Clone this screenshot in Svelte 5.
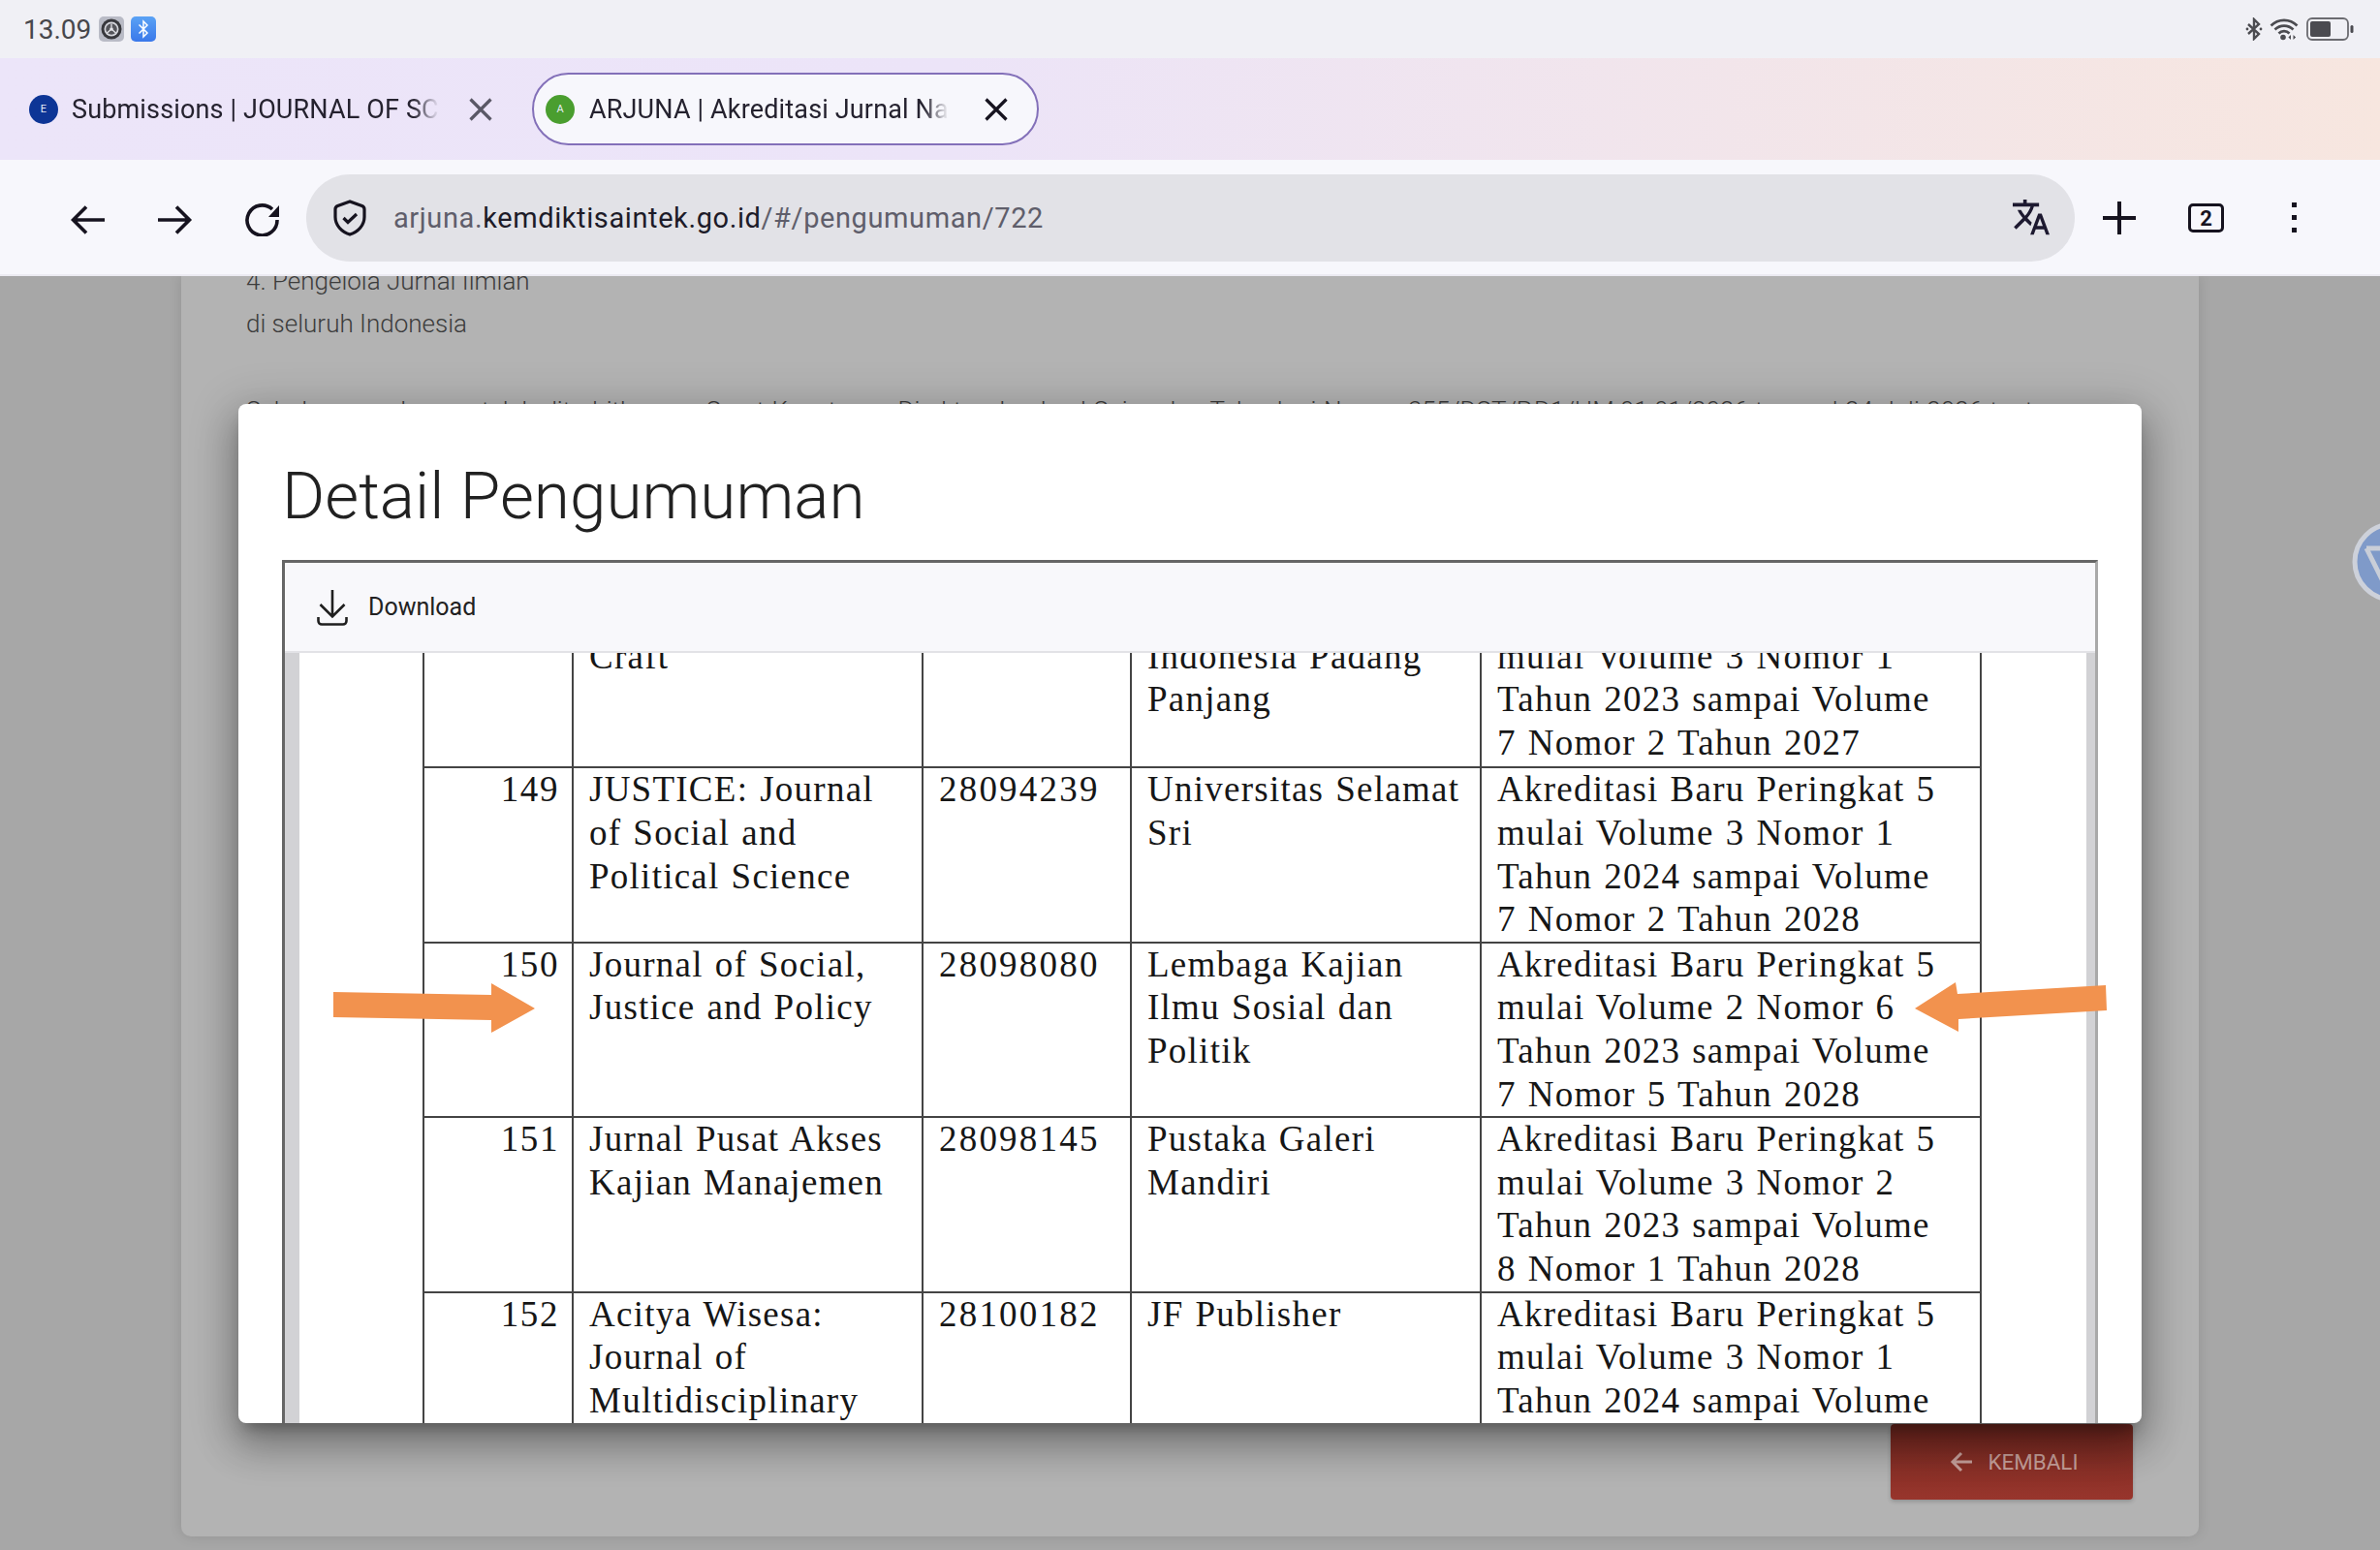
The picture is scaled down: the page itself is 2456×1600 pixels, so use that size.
<script lang="ts">
  const rows = [
    { no: "", title: "\nCraft", issn: "", pub: "\nIndonesia Padang\nPanjang", note: "\nmulai Volume 3 Nomor 1\nTahun 2023 sampai Volume\n7 Nomor 2 Tahun 2027" },
    { no: "149", title: "JUSTICE: Journal\nof Social and\nPolitical Science", issn: "28094239", pub: "Universitas Selamat\nSri", note: "Akreditasi Baru Peringkat 5\nmulai Volume 3 Nomor 1\nTahun 2024 sampai Volume\n7 Nomor 2 Tahun 2028" },
    { no: "150", title: "Journal of Social,\nJustice and Policy", issn: "28098080", pub: "Lembaga Kajian\nIlmu Sosial dan\nPolitik", note: "Akreditasi Baru Peringkat 5\nmulai Volume 2 Nomor 6\nTahun 2023 sampai Volume\n7 Nomor 5 Tahun 2028" },
    { no: "151", title: "Jurnal Pusat Akses\nKajian Manajemen", issn: "28098145", pub: "Pustaka Galeri\nMandiri", note: "Akreditasi Baru Peringkat 5\nmulai Volume 3 Nomor 2\nTahun 2023 sampai Volume\n8 Nomor 1 Tahun 2028" },
    { no: "152", title: "Acitya Wisesa:\nJournal of\nMultidisciplinary", issn: "28100182", pub: "JF Publisher", note: "Akreditasi Baru Peringkat 5\nmulai Volume 3 Nomor 1\nTahun 2024 sampai Volume" },
  ];
</script>

<div class="screen">
  <div class="status-bar">
    <span class="clock">13.09</span>
    <svg class="status-app" viewBox="0 0 26 26">
      <rect width="26" height="26" rx="5" fill="#b9bbc6" />
      <circle cx="13" cy="13" r="10.500" fill="#38383d" />
      <circle cx="13" cy="13" r="7.500" fill="#d5d6dc" />
      <circle cx="13" cy="13" r="5.800" fill="#55555b" />
      <path d="M13 7.500v4M13 13l-4.500 4M13 13l4.500 4" stroke="#e3e3e8" stroke-width="1.300" fill="none" />
      <circle cx="13" cy="13" r="1.800" fill="#e3e3e8" />
    </svg>
    <svg class="status-app" viewBox="0 0 26 26">
      <defs>
        <linearGradient id="btblue" x1="0" y1="0" x2="0" y2="1">
          <stop offset="0" stop-color="#5aa2f5" />
          <stop offset="1" stop-color="#3a78ea" />
        </linearGradient>
      </defs>
      <rect width="26" height="26" rx="5" fill="url(#btblue)" />
      <path d="M8.500 8.500 17 17l-4 4V5l4 4-8.500 8.500" fill="none" stroke="#fff" stroke-width="1.500" />
    </svg>
    <span class="spacer"></span>
    <svg class="status-icon bt" viewBox="0 0 18 24">
      <path d="M3 7l11 10-5 5V2l5 5L3 17" fill="none" stroke="#4b4b50" stroke-width="2.400" />
      <circle cx="2" cy="12" r="1.400" fill="#4b4b50" />
      <circle cx="16" cy="12" r="1.400" fill="#4b4b50" />
    </svg>
    <svg class="status-icon wifi" viewBox="0 0 30 24">
      <path d="M1.500 8.500a19 19 0 0 1 27 0M5.500 12.500a13.500 13.500 0 0 1 19 0M9.500 16.500a7.500 7.500 0 0 1 11 0" fill="none" stroke="#4b4b50" stroke-width="2.600" />
      <circle cx="14" cy="20.500" r="2.800" fill="#4b4b50" />
      <path d="M22 18v5l-2.600-2.500zM24.500 18v5l2.600-2.500z" fill="#4b4b50" />
    </svg>
    <svg class="status-icon battery" viewBox="0 0 50 24">
      <rect x="1" y="1" width="42" height="22" rx="5" fill="none" stroke="#6b6b70" stroke-width="1.800" />
      <rect x="4" y="4" width="21" height="16" rx="2" fill="#4b4b50" />
      <rect x="45.500" y="8" width="3" height="8" rx="1.500" fill="#4b4b50" />
    </svg>
  </div>

  <div class="tab-bar">
    <div class="tab">
      <span class="favicon blue">E</span>
      <span class="tab-title">Submissions | JOURNAL OF SC</span>
      <svg class="tab-close muted" viewBox="0 0 24 24"><path d="M1.500 1.500l21 21M22.500 1.500l-21 21" /></svg>
    </div>
    <div class="tab active">
      <span class="favicon green">A</span>
      <span class="tab-title">ARJUNA | Akreditasi Jurnal Na</span>
      <svg class="tab-close" viewBox="0 0 24 24"><path d="M1.500 1.500l21 21M22.500 1.500l-21 21" /></svg>
    </div>
  </div>

  <div class="toolbar">
    <svg class="nav-icon" viewBox="0 0 36 30"><path d="M35 15H3M16 1.500 2.500 15 16 28.500" /></svg>
    <svg class="nav-icon" viewBox="0 0 36 30"><path d="M0 15h32M19 1.500 32.500 15 19 28.500" /></svg>
    <svg class="nav-icon reload" viewBox="0 0 36 36"><path d="M28 8A15.500 15.500 0 1 0 33 19" /><path class="solid" d="M35 4v12H24z" /></svg>
    <div class="address">
      <svg class="shield" viewBox="0 0 36 38">
        <path d="M18 2 5.500 6.500Q3 7.500 3 10v8c0 8.500 6.500 15.500 15 18 8.500-2.500 15-9.500 15-18v-8q0-2.500-2.500-3.500z" />
        <path d="M11.500 19 16 23.500 25 15" />
      </svg>
      <span class="url"><span class="url-dim">arjuna.</span>kemdiktisaintek.go.id<span class="url-dim">/#/pengumuman/722</span></span>
      <span class="spacer"></span>
      <svg class="translate" viewBox="2 2 21 21"><path d="M12.870 15.070l-2.540-2.510.03-.03c1.740-1.940 2.980-4.170 3.710-6.530H17V4h-7V2H8v2H1v1.990h11.170C11.500 7.920 10.400 9.750 9 11.300 8.090 10.290 7.340 9.190 6.750 8H4.750c.73 1.630 1.730 3.170 2.980 4.560l-5.090 5.020L4 19l5-5 3.110 3.110.76-2.040zM18.500 10h-2L12 22h2l1.120-3h4.750L21 22h2l-4.500-12zm-2.620 7l1.620-4.330L19.120 17h-3.240z" /></svg>
    </div>
    <svg class="plus" viewBox="0 0 34 34"><path d="M17 0v34M0 17h34" /></svg>
    <span class="tab-count">2</span>
    <span class="menu-dots"><i></i><i></i><i></i></span>
  </div>

  <div class="page">
    <div class="card">
      <p class="bg-line clipped">4. Pengelola Jurnal Ilmiah</p>
      <p class="bg-line">di seluruh Indonesia</p>
      <p class="bg-line para">Sehubungan dengan telah diterbitkannya Surat Keputusan Direktur Jenderal Sains dan Teknologi Nomor 355/DST/P.D1/HM.01.01/2026 tanggal 24 Juli 2026 tent</p>
      <button class="back-btn">
        <svg viewBox="0 0 24 24"><path d="M23 12H3M12 3l-9 9 9 9" /></svg>
        KEMBALI
      </button>
    </div>

    <svg class="float-widget" viewBox="0 0 30 84">
      <circle cx="43" cy="42" r="39" fill="#7f9ac9" stroke="#cdd1da" stroke-width="5" />
      <path d="M16 28h20M16 28l18 36" fill="none" stroke="#c9ced8" stroke-width="5" />
    </svg>

    <div class="modal">
      <h2>Detail Pengumuman</h2>
      <div class="viewer">
        <div class="viewer-bar">
          <svg viewBox="0 0 32 38"><path d="M16 1v27M3.500 16 16 28.500 28.500 16M1.500 29v4a3.500 3.500 0 0 0 3.500 3.500h22a3.500 3.500 0 0 0 3.500-3.500v-4" /></svg>
          <span>Download</span>
        </div>
        <div class="viewer-doc">
          <table>
            <colgroup>
              <col class="c-no" /><col class="c-title" /><col class="c-issn" /><col class="c-pub" /><col class="c-note" />
            </colgroup>
            <tbody>
              {#each rows as row}
                <tr>
                  <td class="num">{row.no}</td>
                  <td>{row.title}</td>
                  <td class="num-left">{row.issn}</td>
                  <td>{row.pub}</td>
                  <td>{row.note}</td>
                </tr>
              {/each}
            </tbody>
          </table>
        </div>
      </div>
      <svg class="arrows" viewBox="0 0 1964 1052">
        <polygon points="98,607 261,610 261,598 306,624 261,649 261,636 98,633" />
        <polygon points="1730,624 1772,597 1774,609 1927,600 1928,626 1775,635 1775,648" />
      </svg>
    </div>
  </div>
</div>

<style>
  :global(body) {
    margin: 0;
    background: #a7a7a7;
    font-family: Roboto, "Liberation Sans", sans-serif;
  }

  .screen {
    width: 2456px;
    height: 1600px;
    display: flex;
    flex-direction: column;
    overflow: hidden;
  }

  .spacer {
    flex: 1;
  }

  .status-bar {
    height: 60px;
    flex: none;
    display: flex;
    align-items: center;
    padding: 0 26px 0 24px;
    background: #f0f0f5;
  }

  .clock {
    font-size: 28px;
    color: #47474c;
    margin-right: 8px;
  }

  .status-app {
    width: 26px;
    height: 26px;
    margin-right: 7px;
  }

  .status-icon.bt {
    width: 18px;
    height: 24px;
    margin-right: 7px;
  }

  .status-icon.wifi {
    width: 30px;
    height: 24px;
    margin-right: 8px;
  }

  .status-icon.battery {
    width: 50px;
    height: 24px;
  }

  .tab-bar {
    height: 105px;
    flex: none;
    display: flex;
    align-items: center;
    padding: 0 0 0 11px;
    gap: 15px;
    background: linear-gradient(90deg, #ece5f9 0%, #ece4f8 40%, #f7e6df 100%);
  }

  .tab {
    width: 523px;
    height: 75px;
    box-sizing: border-box;
    display: flex;
    align-items: center;
    padding: 0 24px 0 17px;
    border: 2px solid transparent;
    border-radius: 38px;
    color: #25222f;
    font-size: 27px;
    letter-spacing: 0.15px;
  }

  .tab.active {
    background: #f7f7fc;
    border-color: #8370b9;
    padding: 0 30px 0 12px;
  }

  .tab.active .favicon {
    margin-right: 15px;
  }

  .favicon {
    width: 30px;
    height: 30px;
    flex: none;
    border-radius: 50%;
    display: flex;
    align-items: center;
    justify-content: center;
    color: #e7ecf6;
    font-size: 11px;
    letter-spacing: 0;
    margin-right: 14px;
  }

  .favicon.blue {
    background: #0d3596;
  }

  .favicon.green {
    background: #4a9e2f;
  }

  .tab-title {
    flex: none;
    white-space: nowrap;
    mask-image: linear-gradient(90deg, #000 93%, transparent 100%);
  }

  .tab-close {
    width: 24px;
    height: 24px;
    flex: none;
    margin-left: auto;
    fill: none;
    stroke: #16131f;
    stroke-width: 3.200px;
  }

  .tab-close.muted {
    stroke: #5a5866;
  }

  .toolbar {
    height: 120px;
    flex: none;
    box-sizing: border-box;
    display: flex;
    align-items: flex-start;
    padding: 15px 0 0 73px;
    background: #f7f7fc;
    border-bottom: 2px solid #ecebf2;
  }

  .nav-icon {
    width: 36px;
    height: 30px;
    margin: 32px 54px 0 0;
    fill: none;
    stroke: #16131f;
    stroke-width: 3.600px;
  }

  .nav-icon.reload {
    height: 36px;
    margin: 28px 27px 0 0;
  }

  .nav-icon .solid {
    fill: #16131f;
    stroke: none;
  }

  .address {
    width: 1825px;
    height: 90px;
    flex: none;
    box-sizing: border-box;
    display: flex;
    align-items: center;
    padding: 0 26px 0 27px;
    border-radius: 45px;
    background: #e2e2e7;
  }

  .shield {
    width: 36px;
    height: 38px;
    margin-right: 27px;
    fill: none;
    stroke: #16131f;
    stroke-width: 3.200px;
  }

  .url {
    font-size: 29px;
    letter-spacing: 0.6px;
    color: #1d1b28;
  }

  .url-dim {
    color: #5f5e6b;
  }

  .translate {
    width: 38px;
    height: 38px;
    fill: #1d1930;
  }

  .plus {
    width: 34px;
    height: 34px;
    margin: 28px 0 0 29px;
    fill: none;
    stroke: #16131f;
    stroke-width: 4px;
  }

  .tab-count {
    width: 37px;
    height: 30px;
    box-sizing: border-box;
    margin: 30px 0 0 54px;
    border: 3px solid #16131f;
    border-radius: 5px;
    display: flex;
    align-items: center;
    justify-content: center;
    font-size: 22px;
    font-weight: 700;
    color: #16131f;
  }

  .menu-dots {
    display: flex;
    flex-direction: column;
    gap: 8px;
    margin: 29px 0 0 70px;
  }

  .menu-dots i {
    width: 5px;
    height: 5px;
    background: #16131f;
  }

  .page {
    flex: 1;
    position: relative;
    overflow: hidden;
    padding-left: 187px;
  }

  .card {
    width: 2082px;
    height: 1301px;
    box-sizing: border-box;
    display: flex;
    flex-direction: column;
    padding: 0 68px 38px 67px;
    background: #b3b3b3;
    border-radius: 0 0 10px 10px;
    box-shadow: 0 0 14px rgba(0, 0, 0, 0.12);
  }

  .bg-line {
    margin: 0;
    height: 44px;
    line-height: 44px;
    font-size: 26px;
    font-weight: 300;
    color: #3c3c3c;
    white-space: nowrap;
  }

  .bg-line.clipped {
    margin-top: -17px;
  }

  .bg-line.para {
    margin-top: 46px;
    word-spacing: 1.2px;
  }

  .back-btn {
    width: 250px;
    height: 78px;
    margin-top: auto;
    align-self: flex-end;
    display: flex;
    align-items: center;
    justify-content: center;
    gap: 15px;
    padding: 0 0 0 5px;
    border: none;
    border-radius: 4px;
    background: linear-gradient(180deg, #762921, #98352c);
    color: #c7a19c;
    font-family: Roboto, sans-serif;
    font-size: 22.400px;
    box-shadow: 0 2px 4px rgba(0, 0, 0, 0.2);
  }

  .back-btn svg {
    width: 24px;
    height: 24px;
    fill: none;
    stroke: #c7a19c;
    stroke-width: 3px;
  }

  .float-widget {
    position: absolute;
    right: 0;
    top: 253px;
    width: 30px;
    height: 84px;
  }

  .modal {
    position: absolute;
    left: 246px;
    top: 132px;
    width: 1964px;
    height: 1052px;
    box-sizing: border-box;
    display: flex;
    flex-direction: column;
    padding: 0 45px;
    background: #fff;
    border-radius: 8px;
    box-shadow: 0 11px 15px -7px rgba(0, 0, 0, 0.3), 0 24px 38px 3px rgba(0, 0, 0, 0.22), 0 9px 46px 8px rgba(0, 0, 0, 0.18);
  }

  h2 {
    margin: 55px 0 26px;
    height: 80px;
    line-height: 80px;
    font-size: 67.500px;
    font-weight: 300;
    color: #212121;
  }

  .viewer {
    flex: 1;
    min-height: 0;
    display: flex;
    flex-direction: column;
    width: 1874px;
    box-sizing: border-box;
    border-top: 3px solid #666;
    border-left: 3px solid #666;
    border-right: 3px solid #a9a9a9;
  }

  .viewer-bar {
    height: 93px;
    flex: none;
    box-sizing: border-box;
    display: flex;
    align-items: center;
    gap: 21px;
    padding-left: 33px;
    background: #f8f8fb;
    border-bottom: 2px solid #e2e2e6;
    font-size: 25px;
    color: #222;
  }

  .viewer-bar svg {
    width: 32px;
    height: 38px;
    fill: none;
    stroke: #1f1f1f;
    stroke-width: 2.600px;
  }

  .viewer-doc {
    flex: 1;
    min-height: 0;
    overflow: hidden;
    background: #fff;
    border-left: 15px solid #d2d2d5;
    border-right: 9px solid #d2d2d5;
  }

  table {
    table-layout: fixed;
    width: 1607px;
    margin: -65px 0 0 127px;
    border-collapse: collapse;
    font-family: "Liberation Serif", serif;
    font-size: 37px;
    line-height: 44.600px;
    letter-spacing: 1.25px;
    word-spacing: 1.5px;
    color: #161616;
  }

  .c-no { width: 154px; }
  .c-title { width: 361px; }
  .c-issn { width: 215px; }
  .c-pub { width: 361px; }
  .c-note { width: 516px; }

  tr {
    height: 180.400px;
  }

  tr:first-child {
    height: 182.400px;
  }

  td {
    padding: 0 16px;
    border: 2px solid #444;
    vertical-align: top;
    white-space: pre-line;
  }

  td.num {
    text-align: right;
    padding-right: 13px;
    letter-spacing: 1.6px;
  }

  td.num-left {
    letter-spacing: 2.2px;
  }

  .arrows {
    position: absolute;
    left: 0;
    top: 0;
    width: 1964px;
    height: 1052px;
    pointer-events: none;
    fill: #f2924e;
  }
</style>
